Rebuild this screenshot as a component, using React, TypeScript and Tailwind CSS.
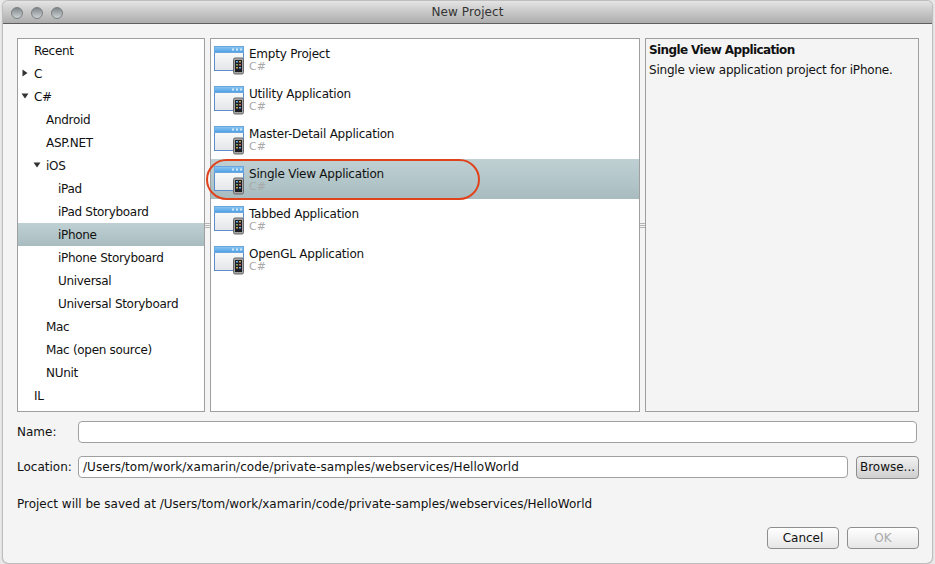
import React from "react";

const font = "font-['DejaVu_Sans',sans-serif]";

const treeRows = [
  { label: "Recent", indent: "pl-[16px]" },
  { label: "C", indent: "pl-[16px]", arrow: "right" },
  { label: "C#", indent: "pl-[16px]", arrow: "down" },
  { label: "Android", indent: "pl-[28px]" },
  { label: "ASP.NET", indent: "pl-[28px]" },
  { label: "iOS", indent: "pl-[28px]", arrow: "down" },
  { label: "iPad", indent: "pl-[40px]" },
  { label: "iPad Storyboard", indent: "pl-[40px]" },
  { label: "iPhone", indent: "pl-[40px]", selected: true },
  { label: "iPhone Storyboard", indent: "pl-[40px]" },
  { label: "Universal", indent: "pl-[40px]" },
  { label: "Universal Storyboard", indent: "pl-[40px]" },
  { label: "Mac", indent: "pl-[28px]" },
  { label: "Mac (open source)", indent: "pl-[28px]" },
  { label: "NUnit", indent: "pl-[28px]" },
  { label: "IL", indent: "pl-[16px]" },
];

const templates = [
  "Empty Project",
  "Utility Application",
  "Master-Detail Application",
  "Single View Application",
  "Tabbed Application",
  "OpenGL Application",
];

const TemplateIcon = () => (
  <svg width="32" height="32" viewBox="0 0 32 32" className="shrink-0">
    <defs>
      <linearGradient id="bar" x1="0" y1="0" x2="0" y2="1">
        <stop offset="0" stopColor="#8cc8f2" />
        <stop offset="1" stopColor="#4f9fe4" />
      </linearGradient>
      <linearGradient id="page" x1="0" y1="0" x2="0" y2="1">
        <stop offset="0" stopColor="#ffffff" />
        <stop offset="1" stopColor="#e4e6ea" />
      </linearGradient>
    </defs>
    <rect x="0.5" y="2.5" width="29" height="24" fill="url(#page)" stroke="#5b8ecb" />
    <rect x="0.5" y="2.5" width="29" height="6" fill="url(#bar)" stroke="#6aa5dd" />
    <rect x="18" y="4.5" width="2" height="2" fill="#d5e8f8" />
    <rect x="22" y="4.5" width="2" height="2" fill="#d5e8f8" />
    <rect x="26" y="4.5" width="2" height="2" fill="#d5e8f8" />
    <rect x="19.5" y="14" width="10" height="16" rx="1.5" fill="#a3a3a3" stroke="#6a6a6a" />
    <rect x="21" y="16" width="7" height="12" fill="#1d1f26" />
    <rect x="22" y="17" width="2" height="1.5" fill="#6fa8dc" />
    <rect x="25" y="17" width="2" height="1.5" fill="#c9a24b" />
    <rect x="22" y="20" width="2" height="1.5" fill="#7fb069" />
    <rect x="25" y="20" width="2" height="1.5" fill="#c96f5b" />
    <rect x="22" y="23" width="2" height="1.5" fill="#c9a24b" />
    <rect x="25" y="23" width="2" height="1.5" fill="#6fa8dc" />
  </svg>
);

const Arrow = ({ dir }: { dir: string }) => (
  <svg width="8" height="8" viewBox="0 0 8 8" className="absolute left-[3px] top-[7px]">
    {dir === "right" ? <path d="M1.5 0.5 L6.5 4 L1.5 7.5 Z" fill="#333" /> : <path d="M0.5 1.5 L7.5 1.5 L4 6.5 Z" fill="#333" />}
  </svg>
);

const Grip = () => (
  <div className="flex w-[5px] shrink-0 flex-col items-center justify-center gap-[1px]">
    <div className="h-px w-[5px] bg-[#b5b5b5]" />
    <div className="h-px w-[5px] bg-[#b5b5b5]" />
    <div className="h-px w-[5px] bg-[#b5b5b5]" />
  </div>
);

const Light = () => (
  <div className="h-[12px] w-[12px] rounded-full border border-[#7a8083] bg-gradient-to-b from-[#7f868a] to-[#cfd4d6]" />
);

const buttonClass =
  "flex items-center justify-center rounded-[4px] border border-[#8e8e8e] bg-gradient-to-b text-[12px]";

export default function App() {
  return (
    <div className={`${font} h-[564px] w-[935px] overflow-hidden bg-[#e9e9e9] pl-[3px] pr-[3px] pt-px pb-px text-[12px] text-[#111]`}>
      <div className="flex h-full flex-col overflow-hidden rounded-[5px] bg-[#f4f4f4] shadow-[0_0_2px_#444]">
        {/* title bar */}
        <div className="relative flex h-[23px] shrink-0 items-center justify-center border-b border-[#5e5e5e] bg-gradient-to-b from-[#e4e4e4] to-[#adadad]">
          <div className="absolute left-[8px] top-[6px] flex gap-[8px]">
            <Light />
            <Light />
            <Light />
          </div>
          <span className="text-[12px] tracking-[0.1px] text-[#333]">New Project</span>
        </div>

        <div className="flex flex-1 flex-col pl-[14px] pr-[13px] pt-[14px]">
          {/* three panes */}
          <div className="relative flex h-[374px] shrink-0">
            <div className="w-[188px] shrink-0 border border-[#9f9f9f] bg-white tracking-[-0.3px]">
              {treeRows.map((row) => (
                <div
                  key={row.label}
                  className={`relative flex h-[23px] items-center ${row.indent} ${row.selected ? "bg-gradient-to-b from-[#bfd0d3] to-[#a8bcc0]" : ""}`}
                >
                  {row.arrow && (
                    <div className={`absolute top-0 h-full ${row.label === "iOS" ? "left-[12px]" : "left-0"}`}>
                      <Arrow dir={row.arrow} />
                    </div>
                  )}
                  {row.label}
                </div>
              ))}
            </div>
            <Grip />
            <div className="w-[430px] shrink-0 border border-[#9f9f9f] bg-white">
              {templates.map((name, i) => (
                <div
                  key={name}
                  className={`flex h-[40px] items-start gap-[3px] pl-[3px] pt-[5px] ${i === 3 ? "bg-gradient-to-b from-[#bfd0d3] to-[#a8bcc0]" : ""}`}
                >
                  <TemplateIcon />
                  <div className="flex flex-col pt-[3px]">
                    <span className="leading-[14px] tracking-[-0.22px]">{name}</span>
                    <span className="text-[11px] leading-[11px] text-[#aaa]">C#</span>
                  </div>
                </div>
              ))}
            </div>
            <Grip />
            <div className="w-[274px] shrink-0 border border-[#9f9f9f] px-[3px] pt-[3px]">
              <div className="font-bold leading-[16px] tracking-[-0.6px]">Single View Application</div>
              <div className="mt-[4px] leading-[16px] tracking-[-0.2px]">Single view application project for iPhone.</div>
            </div>
            {/* callout round the selected template */}
            <div className="absolute left-[189px] top-[121px] h-[41px] w-[274px] rounded-[21px] border-2 border-[#e0431c]" />
          </div>

          {/* form */}
          <div className="mt-[9px] flex h-[22px] items-center">
            <span className="w-[61px] shrink-0">Name:</span>
            <div className="h-[22px] w-[839px] rounded-[4px] border border-[#a0a0a0] bg-white" />
          </div>
          <div className="mt-[13px] flex h-[22px] items-center">
            <span className="w-[61px] shrink-0">Location:</span>
            <div className="flex h-[22px] w-[770px] items-center rounded-[4px] border border-[#a0a0a0] bg-white pl-[4px] tracking-[0.05px]">
              /Users/tom/work/xamarin/code/private-samples/webservices/HelloWorld
            </div>
            <div className={`${buttonClass} ml-[8px] h-[23px] w-[63px] from-[#f2f2f2] to-[#cfcfcf]`}>Browse...</div>
          </div>
          <div className="mt-[18px] leading-[16px]">
            Project will be saved at /Users/tom/work/xamarin/code/private-samples/webservices/HelloWorld
          </div>

          <div className="mt-[15px] flex justify-end gap-[8px]">
            <div className={`${buttonClass} h-[22px] w-[72px] from-[#ffffff] to-[#e6e6e6]`}>Cancel</div>
            <div className={`${buttonClass} h-[22px] w-[72px] from-[#ffffff] to-[#e6e6e6] text-[#aaa]`}>OK</div>
          </div>
        </div>
      </div>
    </div>
  );
}
